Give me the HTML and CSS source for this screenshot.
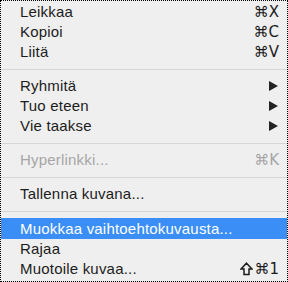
FILE: index.html
```html
<!DOCTYPE html>
<html lang="fi">
	<head>
		<meta charset="UTF-8" />
		<title>Kontekstivalikko</title>
		<link rel="stylesheet" href="styles.css">
	</head>
	<body>
		<div class="menu">
			<div class="item"><span>Leikkaa</span><span class="key">⌘X</span></div>
			<div class="item"><span>Kopioi</span><span class="key">⌘C</span></div>
			<div class="item"><span>Liitä</span><span class="key">⌘V</span></div>
			<div class="sep"></div>
			<div class="item"><span>Ryhmitä</span><span class="arrow"></span></div>
			<div class="item"><span>Tuo eteen</span><span class="arrow"></span></div>
			<div class="item"><span>Vie taakse</span><span class="arrow"></span></div>
			<div class="sep"></div>
			<div class="item disabled"><span>Hyperlinkki...</span><span class="key">⌘K</span></div>
			<div class="sep"></div>
			<div class="item"><span>Tallenna kuvana...</span></div>
			<div class="sep"></div>
			<div class="item active"><span>Muokkaa vaihtoehtokuvausta...</span></div>
			<div class="item"><span>Rajaa</span></div>
			<div class="item">
				<span>Muotoile kuvaa...</span>
				<span class="key">
					<svg class="shift" width="13" height="14" viewBox="0 0 13 14">
						<path d="M6.5 1.2 L12 7 H9 V12.5 H4 V7 H1 Z" fill="none" stroke="#1c1c1c" stroke-width="1.5" stroke-linejoin="miter" />
					</svg>⌘1
				</span>
			</div>
		</div>
	</body>
</html>
```

FILE: styles.css
```css
html,
body {
	margin: 0;
	padding: 0;
}
body {
	width: 288px;
	height: 282px;
	font-family: "Liberation Sans", Arial, sans-serif;
	font-size: 15px;
	letter-spacing: 0.2px;
	color: #1c1c1c;
}
.menu {
	box-sizing: border-box;
	width: 288px;
	height: 282px;
	border: 1px dotted #000;
	background-color: #efefef;
	padding: 1px 0 0 0;
}
.item {
	display: flex;
	align-items: center;
	justify-content: space-between;
	height: 20px;
	line-height: 20px;
	padding: 0 8px 0 19px;
}
.item.disabled {
	color: #a6a6a6;
}
.item.active {
	background-color: #3a8ef6;
	color: white;
	height: 21px;
}
.key {
	display: flex;
	align-items: center;
	font-family: "DejaVu Sans", sans-serif;
	font-size: 15px;
	letter-spacing: 0;
}
.shift {
	margin-right: 1px;
}
.arrow {
	width: 0;
	height: 0;
	border-top: 5px solid transparent;
	border-bottom: 5px solid transparent;
	border-left: 9px solid #222;
	margin-right: 1px;
}
.sep {
	height: 1px;
	background-color: #d6d6d6;
	margin: 7px 0 6px 0;
}
```
